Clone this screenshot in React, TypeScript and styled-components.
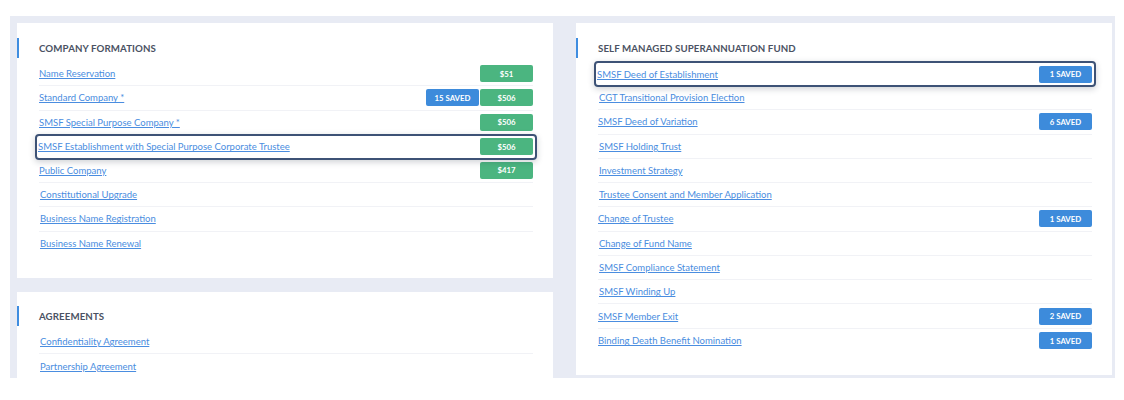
import React from "react";
import styled, { createGlobalStyle } from "styled-components";

const Global = createGlobalStyle`
  html, body { margin: 0; padding: 0; background: #ffffff; }
  body { font-family: "Lato", "Open Sans", sans-serif; }
`;

const Page = styled.div`
  padding: 16px 8px 0 10px;
  width: 1124px;
  box-sizing: border-box;
`;

const Board = styled.div`
  width: 1105px;
  height: 362px;
  box-sizing: border-box;
  background: #e8ebf4;
  padding: 7px 2px 0 7px;
  display: grid;
  grid-template-columns: 536px 536px;
  column-gap: 23px;
  align-items: start;
  overflow: hidden;
`;

const Column = styled.div`
  display: flex;
  flex-direction: column;
  gap: 14px;
`;

const Card = styled.section<{ $top?: number }>`
  background: #ffffff;
  padding: ${(p) => p.$top ?? 15}px 20px 22px 22px;
  box-sizing: border-box;
`;

const Heading = styled.h2`
  margin: 0 0 4px -22px;
  padding-left: 20px;
  border-left: 2px solid #3f8de0;
  height: 20px;
  display: flex;
  align-items: center;
  font-size: 9.7px;
  font-weight: 700;
  color: #4a5263;
  letter-spacing: 0.1px;
`;

const List = styled.ul`
  list-style: none;
  margin: 0;
  padding: 0;
`;

const Row = styled.li<{ $active?: boolean }>`
  height: 24.27px;
  box-sizing: border-box;
  display: flex;
  align-items: center;
  justify-content: space-between;
  border-bottom: 1px solid #f1f2f6;
  &:last-child { border-bottom: none; }
  ${(p) =>
    p.$active &&
    `
    margin: -1px -4px;
    padding: 0 2px 0 1px;
    border: 2px solid #3d5276 !important;
    border-radius: 4px;
    box-shadow: 0 2px 6px rgba(30, 40, 60, 0.22);
    height: 26px;
    position: relative;
  `}
`;

const Link = styled.a<{ $indent?: number }>`
  font-size: 9.5px;
  color: #4a8de0;
  text-decoration: underline;
  text-underline-offset: 1px;
  padding-left: ${(p) => p.$indent ?? 0}px;
  cursor: pointer;
`;

const Badges = styled.div`
  display: flex;
  gap: 1px;
`;

const Badge = styled.span<{ $tone: "green" | "blue" }>`
  width: 53px;
  height: 17px;
  border-radius: 2px;
  display: flex;
  align-items: center;
  justify-content: center;
  font-size: 7.8px;
  font-weight: 700;
  color: #ffffff;
  background: ${(p) => (p.$tone === "green" ? "#4bb580" : "#3d8bdb")};
`;

type Item = { name: string; price?: string; saved?: string; active?: boolean; indent?: number };

const company: Item[] = [
  { name: "Name Reservation", price: "$51" },
  { name: "Standard Company *", price: "$506", saved: "15 SAVED" },
  { name: "SMSF Special Purpose Company *", price: "$506" },
  { name: "SMSF Establishment with Special Purpose Corporate Trustee", price: "$506", active: true },
  { name: "Public Company", price: "$417" },
  { name: "Constitutional Upgrade", indent: 1 },
  { name: "Business Name Registration", indent: 1 },
  { name: "Business Name Renewal", indent: 1 },
];

const agreements: Item[] = [
  { name: "Confidentiality Agreement", indent: 1 },
  { name: "Partnership Agreement", indent: 1 },
];

const smsf: Item[] = [
  { name: "SMSF Deed of Establishment", saved: "1 SAVED", active: true },
  { name: "CGT Transitional Provision Election", indent: 1 },
  { name: "SMSF Deed of Variation", saved: "6 SAVED" },
  { name: "SMSF Holding Trust", indent: 1 },
  { name: "Investment Strategy", indent: 1 },
  { name: "Trustee Consent and Member Application", indent: 1 },
  { name: "Change of Trustee", saved: "1 SAVED" },
  { name: "Change of Fund Name", indent: 1 },
  { name: "SMSF Compliance Statement", indent: 1 },
  { name: "SMSF Winding Up", indent: 1 },
  { name: "SMSF Member Exit", saved: "2 SAVED" },
  { name: "Binding Death Benefit Nomination", saved: "1 SAVED" },
];

function Items({ items }: { items: Item[] }) {
  return (
    <List>
      {items.map((it) => (
        <Row key={it.name} $active={it.active}>
          <Link $indent={it.indent}>{it.name}</Link>
          {(it.saved || it.price) && (
            <Badges>
              {it.saved && <Badge $tone="blue">{it.saved}</Badge>}
              {it.price && <Badge $tone="green">{it.price}</Badge>}
            </Badges>
          )}
        </Row>
      ))}
    </List>
  );
}

export default function App() {
  return (
    <>
      <Global />
      <Page>
        <Board>
          <Column>
            <Card>
              <Heading>COMPANY FORMATIONS</Heading>
              <Items items={company} />
            </Card>
            <Card $top={14}>
              <Heading>AGREEMENTS</Heading>
              <Items items={agreements} />
            </Card>
          </Column>
          <Column>
            <Card>
              <Heading>SELF MANAGED SUPERANNUATION FUND</Heading>
              <Items items={smsf} />
            </Card>
          </Column>
        </Board>
      </Page>
    </>
  );
}
